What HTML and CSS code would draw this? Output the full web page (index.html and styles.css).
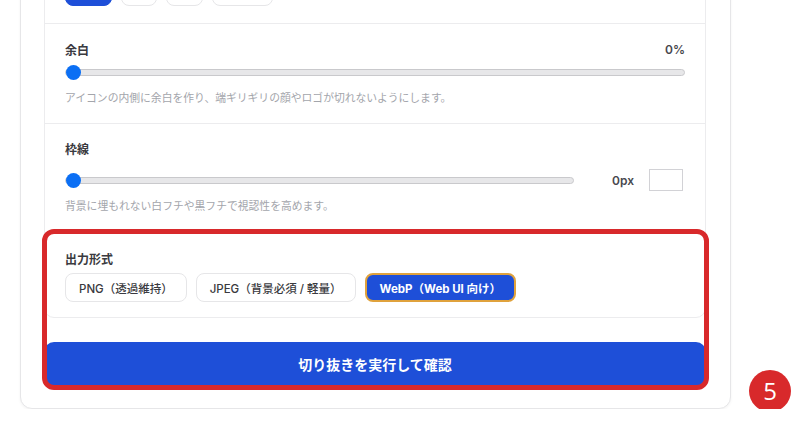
FILE: index.html
```html
<!DOCTYPE html>
<html lang="ja">
<head>
<meta charset="UTF-8">
<meta name="viewport" content="width=device-width, initial-scale=1.0">
<title>アイコン切り抜き</title>
<link rel="stylesheet" href="styles.css">
</head>
<body>
<div class="card">
    <div class="panel">
        <!-- 形状の選択 -->
        <div class="section section-shape">
            <div class="shape-row">
                <button class="shape active w1" title="円形"></button>
                <button class="shape w2" title="角丸"></button>
                <button class="shape w3" title="四角"></button>
                <button class="shape w4" title="なし"></button>
            </div>
        </div>

        <!-- 余白 -->
        <div class="section">
            <div class="field-head">
                <span class="label">余白</span>
                <span class="value">0%</span>
            </div>
            <input type="range" class="slider slider-pad" min="0" max="30" value="0">
            <p class="hint">アイコンの内側に余白を作り、端ギリギリの顔やロゴが切れないようにします。</p>
        </div>

        <!-- 枠線 -->
        <div class="section section-border">
            <div class="field-head">
                <span class="label">枠線</span>
            </div>
            <div class="border-row">
                <input type="range" class="slider" min="0" max="20" value="0">
                <span class="value border-value">0px</span>
                <span class="color-box"></span>
            </div>
            <p class="hint">背景に埋もれない白フチや黒フチで視認性を高めます。</p>
        </div>

        <!-- 出力形式 -->
        <div class="section section-format">
            <div class="field-head">
                <span class="label">出力形式</span>
            </div>
            <div class="format-row">
                <button class="format">PNG（透過維持）</button>
                <button class="format">JPEG（背景必須 / 軽量）</button>
                <button class="format selected">WebP（Web UI 向け）</button>
            </div>
        </div>
    </div>

    <button class="run-button">切り抜きを実行して確認</button>

    <div class="highlight"></div>
    <div class="step-badge">5</div>
</div>
</body>
</html>
```

FILE: styles.css
```css
body {
    margin: 0;
    padding: 0;
    background-color: #fff;
    font-family: Inter, "Noto Sans CJK JP", sans-serif;
    color: #3a3a40;
}

.card {
    position: relative;
    width: 662px;
    margin: -65px 0 0 20px;
    padding: 23px 24px 22px 23px;
    background-color: #fff;
    border: 1px solid #e6e6e8;
    border-radius: 12px;
    box-shadow: 0 1px 3px rgba(0, 0, 0, 0.05);
}

.panel {
    border: 1px solid #ececee;
    border-radius: 10px;
}

.section {
    padding: 16px 20px 16px 20px;
    border-bottom: 1px solid #ececee;
}

.section:last-child {
    border-bottom: none;
}

/* 形状ボタン（上部は画面外） */
.section-shape {
    padding-bottom: 17px;
}

.shape-row {
    display: flex;
    gap: 9px;
}

.shape {
    height: 30px;
    padding: 0;
    background-color: #fff;
    border: 1px solid #e6e6e8;
    border-radius: 8px;
}

.shape.active {
    background-color: #1e4fd8;
    border-color: #1e4fd8;
}

.w1 { width: 47px; }
.w2 { width: 36px; }
.w3 { width: 37px; }
.w4 { width: 61px; }

.field-head {
    display: flex;
    justify-content: space-between;
    align-items: center;
    height: 18px;
}

.label {
    font-size: 12px;
    font-weight: 700;
    color: #3a3a40;
}

.value {
    font-size: 12px;
    font-weight: 600;
    color: #48484e;
}

.hint {
    margin: 11px 0 0 0;
    font-size: 10.8px;
    line-height: 16px;
    color: #a3a5ab;
}

/* スライダー */
.slider {
    -webkit-appearance: none;
    appearance: none;
    display: block;
    width: 100%;
    height: 16px;
    margin: 6px 0 0 0;
    padding: 0;
    background: transparent;
}

.slider::-webkit-slider-runnable-track {
    height: 7px;
    background-color: #e7e7e9;
    border: 1px solid #c9c9cc;
    border-radius: 4px;
    box-sizing: border-box;
}

.slider::-webkit-slider-thumb {
    -webkit-appearance: none;
    width: 15px;
    height: 15px;
    margin-top: -5px;
    border-radius: 50%;
    background-color: #0b6ff4;
    border: none;
}

.section-border {
    padding-top: 15px;
    padding-bottom: 17px;
}

.border-row {
    display: flex;
    align-items: center;
    height: 22px;
    margin-top: 12px;
}

.border-row .slider {
    flex: 1;
    margin: 0 38px 0 0;
}

.border-value {
    width: 22px;
}

.color-box {
    width: 32px;
    height: 20px;
    margin: 0 2px 0 15px;
    border: 1px solid #d2d2d6;
    background-color: #fff;
}

.section-border .hint {
    margin-top: 8px;
}

/* 出力形式 */
.section-format {
    padding-top: 16px;
    padding-bottom: 15px;
}

.format-row {
    display: flex;
    gap: 9px;
    margin-top: 6px;
}

.format {
    height: 29px;
    padding: 0 13px;
    background-color: #fff;
    border: 1px solid #e6e6e8;
    border-radius: 8px;
    font-family: inherit;
    font-size: 11.5px;
    font-weight: 500;
    color: #3a3a40;
}

.format.selected {
    background-color: #1e4fd8;
    border: 2px solid #e0a23c;
    color: #fff;
    font-weight: 700;
}

.run-button {
    display: block;
    width: 100%;
    height: 44px;
    margin-top: 24px;
    background-color: #1e4fd8;
    color: #fff;
    border: none;
    border-radius: 10px;
    font-family: inherit;
    font-size: 14px;
    font-weight: 700;
}

/* 注目枠と手順番号 */
.highlight {
    position: absolute;
    left: 21px;
    right: 21px;
    bottom: 18px;
    height: 151px;
    border: 5px solid #d8292b;
    border-radius: 12px;
    pointer-events: none;
}

.step-badge {
    position: absolute;
    left: 728px;
    bottom: -4px;
    width: 42px;
    height: 42px;
    border-radius: 50%;
    background-color: #d8292b;
    color: #fff;
    font-family: "Open Sans", sans-serif;
    font-size: 24px;
    line-height: 42px;
    text-align: center;
}
```
